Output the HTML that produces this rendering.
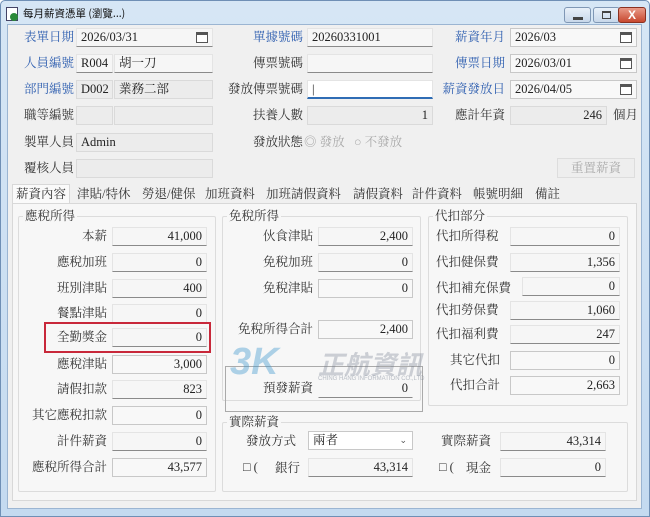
<!DOCTYPE html>
<html><head><meta charset="utf-8"><style>
*{margin:0;padding:0;box-sizing:border-box}
body{width:650px;height:517px;overflow:hidden;background:#fff;font-family:"Liberation Serif","Noto Serif CJK TC","Noto Sans CJK TC",serif;font-size:12.5px;color:#222}
#win{position:absolute;left:0;top:0;width:650px;height:517px;background:linear-gradient(#d6e6f5,#c4daf0);border:1px solid #6f8fb5;border-radius:5px 5px 0 0}
#client{position:absolute;left:7px;top:24px;width:635px;height:485px;background:#f0f0f0;border:1px solid #9bb5d2}
.a{position:absolute;white-space:nowrap;line-height:18px}
.lb{color:#333}
.bl{color:#2f5fb0}
.in{position:absolute;height:19px;background:#f6f6f6;border:1px solid #e4e4e4;border-bottom:1px solid #8a8a8a;line-height:17px;padding:0 4px;white-space:nowrap}
.gr{background:#ececec;border:1px solid #dadada}
.bx{background:#f8f8f8;border:1px solid #c8c8c8}
.r{text-align:right}
.grp{position:absolute;border:1px solid #dcdcdc;border-radius:2px}
.gt{position:absolute;top:-9px;left:4px;background:#f7f7f7;padding:0 2px;line-height:16px;color:#333}
.cal{position:absolute;right:4px;top:3px;width:12px;height:11px;border:1px solid #555;border-top:3px solid #555;background:#fff}
.tab{position:absolute;top:186px;line-height:16px;color:#333}
.btn{position:absolute;width:27px;height:16px;border:1px solid #7f97b5;border-radius:3px;background:linear-gradient(#e8f0f9,#c8d8ea)}
</style></head><body>
<div id="win">
<div style="position:absolute;left:5px;top:6px;width:12px;height:14px;border:1px solid #446;background:#fff"></div>
<div style="position:absolute;left:9px;top:12px;width:8px;height:8px;background:#2a8a3a;border-radius:50%"></div>
<div class="a" style="left:22px;top:4px;font-size:10.5px;font-family:'Noto Sans CJK TC',sans-serif;color:#111">每月薪資憑單 (瀏覽...)</div>
<div class="btn" style="left:563px;top:6px"><div style="position:absolute;left:8px;top:9px;width:10px;height:3px;background:#444"></div></div>
<div class="btn" style="left:592px;top:6px"><div style="position:absolute;left:8px;top:3px;width:9px;height:8px;border:1px solid #444;border-top:2px solid #444"></div></div>
<div class="btn" style="left:617px;top:6px;width:28px;background:linear-gradient(#e99a88,#c7482f);border-color:#8a3020;color:#fff;text-align:center;font:bold 12px/14px 'Liberation Sans',sans-serif">X</div>
</div>
<div id="client"></div>

<!-- header rows -->
<div class="a bl" style="right:576px;top:28px">表單日期</div>
<div class="in" style="left:76px;top:28px;width:137px">2026/03/31<div class="cal"></div></div>
<div class="a bl" style="right:347px;top:28px">單據號碼</div>
<div class="in" style="left:307px;top:28px;width:126px">20260331001</div>
<div class="a bl" style="right:145px;top:28px">薪資年月</div>
<div class="in bx" style="left:510px;top:28px;width:127px">2026/03<div class="cal"></div></div>

<div class="a bl" style="right:576px;top:54px">人員編號</div>
<div class="in" style="left:76px;top:54px;width:37px">R004</div>
<div class="in" style="left:114px;top:54px;width:99px">胡一刀</div>
<div class="a lb" style="right:347px;top:54px">傳票號碼</div>
<div class="in" style="left:307px;top:54px;width:126px"></div>
<div class="a bl" style="right:145px;top:54px">傳票日期</div>
<div class="in bx" style="left:510px;top:54px;width:127px">2026/03/01<div class="cal"></div></div>

<div class="a bl" style="right:576px;top:80px">部門編號</div>
<div class="in gr" style="left:76px;top:80px;width:37px">D002</div>
<div class="in gr" style="left:114px;top:80px;width:99px">業務二部</div>
<div class="a lb" style="right:347px;top:80px">發放傳票號碼</div>
<div class="in" style="left:307px;top:80px;width:126px;background:#fff;border-bottom:2px solid #2f6db5">|</div>
<div class="a bl" style="right:145px;top:80px">薪資發放日</div>
<div class="in bx" style="left:510px;top:80px;width:127px">2026/04/05<div class="cal"></div></div>

<div class="a lb" style="right:576px;top:106px">職等編號</div>
<div class="in gr" style="left:76px;top:106px;width:37px"></div>
<div class="in gr" style="left:114px;top:106px;width:99px"></div>
<div class="a lb" style="right:347px;top:106px">扶養人數</div>
<div class="in gr r" style="left:307px;top:106px;width:126px">1</div>
<div class="a lb" style="right:145px;top:106px">應計年資</div>
<div class="in gr r" style="left:510px;top:106px;width:97px">246</div>
<div class="a lb" style="left:613px;top:106px">個月</div>

<div class="a lb" style="right:576px;top:133px">製單人員</div>
<div class="in gr" style="left:76px;top:133px;width:137px">Admin</div>
<div class="a lb" style="right:347px;top:133px">發放狀態</div>
<div class="a" style="left:304px;top:133px;color:#aaa">◎ 發放 &nbsp;&nbsp;○ 不發放</div>

<div class="a lb" style="right:576px;top:159px">覆核人員</div>
<div class="in gr" style="left:76px;top:159px;width:137px"></div>
<div class="a" style="left:557px;top:158px;width:78px;height:20px;border:1px solid #ddd;background:#eee;color:#aaa;text-align:center">重置薪資</div>

<!-- tabs -->
<div style="position:absolute;left:12px;top:184px;width:58px;height:20px;background:#fafafa;border:1px solid #d8d8d8;border-bottom:none"></div>
<div class="tab" style="left:16px">薪資內容</div>
<div class="tab" style="left:77px">津貼/特休</div>
<div class="tab" style="left:142px">勞退/健保</div>
<div class="tab" style="left:205px">加班資料</div>
<div class="tab" style="left:266px">加班請假資料</div>
<div class="tab" style="left:353px">請假資料</div>
<div class="tab" style="left:412px">計件資料</div>
<div class="tab" style="left:473px">帳號明細</div>
<div class="tab" style="left:535px">備註</div>
<div style="position:absolute;left:12px;top:203px;width:625px;height:298px;background:#f7f7f7;border:1px solid #d8d8d8"></div>

<!-- groups -->
<div class="grp" style="left:18px;top:216px;width:198px;height:276px"><div class="gt">應稅所得</div></div>
<div class="grp" style="left:222px;top:216px;width:199px;height:185px"><div class="gt">免稅所得</div></div>
<div class="grp" style="left:428px;top:216px;width:200px;height:190px"><div class="gt">代扣部分</div></div>
<div class="grp" style="left:222px;top:422px;width:406px;height:70px"><div class="gt">實際薪資</div></div>

<!-- left column -->
<div class="a lb" style="right:543px;top:227px">本薪</div><div class="in r" style="left:112px;top:227px;width:95px">41,000</div>
<div class="a lb" style="right:543px;top:253px">應稅加班</div><div class="in r" style="left:112px;top:253px;width:95px">0</div>
<div class="a lb" style="right:543px;top:279px">班別津貼</div><div class="in r" style="left:112px;top:279px;width:95px">400</div>
<div class="a lb" style="right:543px;top:304px">餐點津貼</div><div class="in r" style="left:112px;top:304px;width:95px">0</div>
<div style="position:absolute;left:44px;top:322px;width:167px;height:31px;border:2px solid #c8283a"></div>
<div class="a lb" style="right:543px;top:328px">全勤獎金</div><div class="in r" style="left:112px;top:328px;width:95px">0</div>
<div class="a lb" style="right:543px;top:355px">應稅津貼</div><div class="in bx r" style="left:112px;top:355px;width:95px">3,000</div>
<div class="a lb" style="right:543px;top:380px">請假扣款</div><div class="in r" style="left:112px;top:380px;width:95px">823</div>
<div class="a lb" style="right:543px;top:406px">其它應稅扣款</div><div class="in bx r" style="left:112px;top:406px;width:95px">0</div>
<div class="a lb" style="right:543px;top:432px">計件薪資</div><div class="in r" style="left:112px;top:432px;width:95px">0</div>
<div class="a lb" style="right:543px;top:458px">應稅所得合計</div><div class="in bx r" style="left:112px;top:458px;width:95px">43,577</div>

<!-- middle -->
<div class="a lb" style="right:337px;top:227px">伙食津貼</div><div class="in r" style="left:318px;top:227px;width:95px">2,400</div>
<div class="a lb" style="right:337px;top:253px">免稅加班</div><div class="in r" style="left:318px;top:253px;width:95px">0</div>
<div class="a lb" style="right:337px;top:279px">免稅津貼</div><div class="in bx r" style="left:318px;top:279px;width:95px">0</div>
<div class="a lb" style="right:337px;top:320px">免稅所得合計</div><div class="in bx r" style="left:318px;top:320px;width:95px">2,400</div>
<div style="position:absolute;left:225px;top:366px;width:198px;height:46px;border:1px solid #aaa"></div>
<!-- watermark -->
<div class="a" style="left:230px;top:342px;font:italic bold 38px/40px 'Liberation Sans',sans-serif;color:rgba(60,150,205,.4)">3K</div>
<div class="a" style="left:318px;top:350px;font:italic bold 26px/28px 'Noto Sans CJK TC',sans-serif;color:rgba(120,130,145,.35)">正航資訊</div>
<div class="a" style="left:318px;top:375px;font-size:6px;line-height:8px;color:rgba(120,130,145,.5);font-family:'Liberation Sans',sans-serif">CHING HANG INFORMATION CO.,LTD</div>
<div class="a lb" style="right:337px;top:379px">預發薪資</div><div class="in r" style="left:318px;top:379px;width:95px;background:transparent;border-top-color:transparent;border-left-color:transparent;border-right-color:transparent">0</div>

<!-- right -->
<div class="a lb" style="left:436px;top:227px">代扣所得稅</div><div class="in r" style="left:510px;top:227px;width:110px">0</div>
<div class="a lb" style="left:436px;top:253px">代扣健保費</div><div class="in r" style="left:510px;top:253px;width:110px">1,356</div>
<div class="a lb" style="left:436px;top:279px">代扣補充保費</div><div class="in r" style="left:522px;top:277px;width:98px">0</div>
<div class="a lb" style="left:436px;top:301px">代扣勞保費</div><div class="in r" style="left:510px;top:301px;width:110px">1,060</div>
<div class="a lb" style="left:436px;top:325px">代扣福利費</div><div class="in r" style="left:510px;top:325px;width:110px">247</div>
<div class="a lb" style="left:450px;top:351px">其它代扣</div><div class="in bx r" style="left:510px;top:351px;width:110px">0</div>
<div class="a lb" style="left:450px;top:376px">代扣合計</div><div class="in bx r" style="left:510px;top:376px;width:110px">2,663</div>

<!-- 實際薪資 -->
<div class="a lb" style="left:246px;top:432px">發放方式</div>
<div class="in bx" style="left:308px;top:431px;width:105px;background:#fff">兩者<span style="position:absolute;right:5px;top:0;font-size:9px;color:#555">⌄</span></div>
<div class="a lb" style="left:441px;top:432px">實際薪資</div><div class="in r" style="left:500px;top:432px;width:106px">43,314</div>
<div class="a lb" style="left:243px;top:458px">□ (</div>
<div class="a lb" style="left:275px;top:459px">銀行</div><div class="in r" style="left:308px;top:458px;width:105px">43,314</div>
<div class="a lb" style="left:439px;top:458px">□ (</div>
<div class="a lb" style="left:466px;top:459px">現金</div><div class="in r" style="left:500px;top:458px;width:106px">0</div>
</body></html>
